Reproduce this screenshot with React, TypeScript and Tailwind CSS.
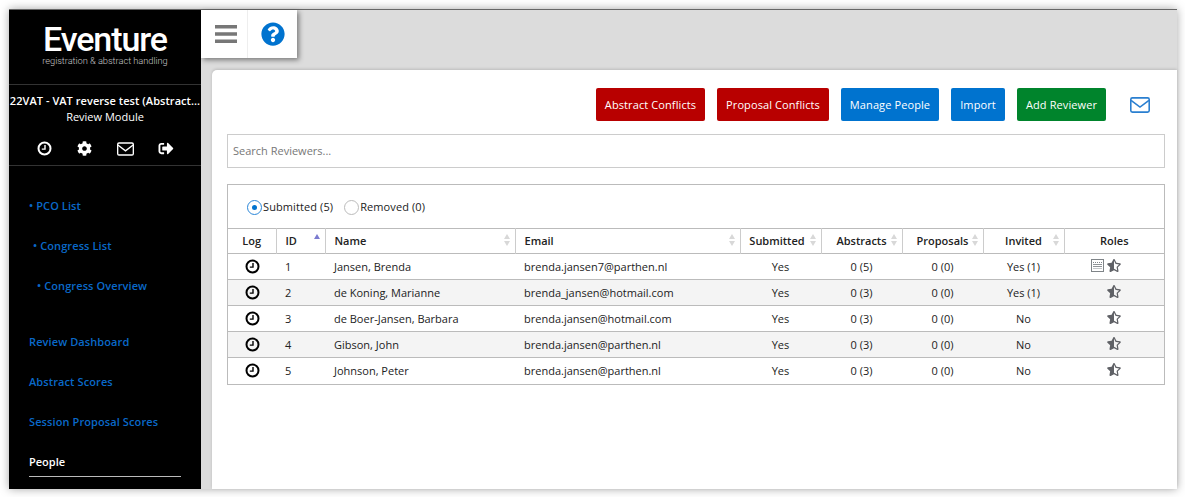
import React from "react";
import { FaCog, FaQuestionCircle, FaStarHalfAlt, FaSignOutAlt } from "react-icons/fa";

const Clock = ({ className = "" }: { className?: string }) => (
  <svg viewBox="0 0 15 15" className={className} width="15" height="15">
    <circle cx="7.5" cy="7.5" r="6" fill="none" stroke="currentColor" strokeWidth="2" />
    <path d="M8 4V8.1H4.8" fill="none" stroke="currentColor" strokeWidth="1.4" />
  </svg>
);

const Envelope = ({ w, h, className = "" }: { w: number; h: number; className?: string }) => (
  <svg viewBox="0 0 19 15" width={w} height={h} className={className}>
    <rect x="0.75" y="0.75" width="17.5" height="13.5" rx="1.5" fill="none" stroke="currentColor" strokeWidth="1.5" />
    <path d="M1 3L9.5 9.5L18 3" fill="none" stroke="currentColor" strokeWidth="1.5" />
  </svg>
);

const Sort = ({ up = false }: { up?: boolean }) => (
  <span className="absolute right-[5px] top-[5px] flex flex-col gap-[2px]">
    <svg width="6" height="5" viewBox="0 0 6 5"><path d="M3 0L6 5H0Z" fill={up ? "#7b7bd0" : "#d8d8d8"} /></svg>
    <svg width="6" height="5" viewBox="0 0 6 5"><path d="M0 0H6L3 5Z" fill={up ? "#ffffff" : "#d8d8d8"} /></svg>
  </span>
);

const Star = () => <FaStarHalfAlt className="text-[#5f6166] w-[14px] h-[13px]" />;

const Sheet = () => (
  <svg width="13" height="13" viewBox="0 0 13 13">
    <rect x="0.5" y="0.5" width="12" height="12" fill="#fff" stroke="#7f8488" />
    <path d="M2 3.5H11" stroke="#7f8488" strokeDasharray="1 1" />
    <path d="M2 5.5H11M2 7.5H11" stroke="#8f9498" />
    <path d="M2 9.5H11" stroke="#c4c7ca" />
  </svg>
);

const rows = [
  ["1", "Jansen, Brenda", "brenda.jansen7@parthen.nl", "Yes", "0 (5)", "0 (0)", "Yes (1)", true],
  ["2", "de Koning, Marianne", "brenda_jansen@hotmail.com", "Yes", "0 (3)", "0 (0)", "Yes (1)", false],
  ["3", "de Boer-Jansen, Barbara", "brenda.jansen@hotmail.com", "Yes", "0 (3)", "0 (0)", "No", false],
  ["4", "Gibson, John", "brenda.jansen@parthen.nl", "Yes", "0 (3)", "0 (0)", "No", false],
  ["5", "Johnson, Peter", "brenda.jansen@parthen.nl", "Yes", "0 (3)", "0 (0)", "No", false],
] as const;

const NavLink = ({ children, className = "" }: { children: React.ReactNode; className?: string }) => (
  <div className={`h-[40px] flex items-center font-semibold tracking-[0.1px] text-[#0a69c9] ${className}`}>{children}</div>
);

const Btn = ({ children, color, width }: { children: React.ReactNode; color: string; width: string }) => (
  <button className={`h-[33px] pt-[1px] rounded-[2px] text-white text-[11px] tracking-[0.1px] flex items-center justify-center ${color} ${width}`}>{children}</button>
);

export default function App() {
  return (
    <div className="w-[1185px] h-[497px] bg-white overflow-hidden pt-[9px] pl-[9px] font-['Open_Sans',sans-serif] text-[11px] text-[#222]">
      <div className="w-[1168px] h-[480px] flex border-t border-[#666] shadow-[0_0_9px_rgba(0,0,0,0.35)] bg-white">
        <aside className="w-[192px] shrink-0 bg-black text-white flex flex-col">
          <div className="h-[75px] border-b border-[#333] flex flex-col items-center pt-[13px]">
            <div className="font-['Roboto',sans-serif] font-medium text-[34px] leading-[33px] tracking-[-1.1px] text-white">Eventure</div>
            <div className="font-['Roboto',sans-serif] font-light text-[9.3px] leading-[9px] tracking-[-0.05px] text-[#c4c4c4]">registration &amp; abstract handling</div>
          </div>
          <div className="h-[81px] border-b border-[#333] flex flex-col">
            <div className="mt-[8px] font-semibold text-center whitespace-nowrap leading-[16px] tracking-[0.05px]">22VAT - VAT reverse test (Abstract...</div>
            <div className="text-center leading-[16px]">Review Module</div>
            <div className="mt-[16px] grid grid-cols-4 items-center justify-items-center w-[162px] ml-[15px] text-white">
              <Clock className="text-white" />
              <FaCog className="w-[15px] h-[15px]" />
              <Envelope w={17} h={14} />
              <FaSignOutAlt className="w-[16px] h-[15px]" />
            </div>
          </div>
          <div className="pl-[20px] pt-[20px] flex-1">
            <NavLink>• PCO List</NavLink>
            <NavLink className="pl-[4px]">• Congress List</NavLink>
            <NavLink className="pl-[8px]">• Congress Overview</NavLink>
            <div className="h-[16px]" />
            <NavLink>Review Dashboard</NavLink>
            <NavLink>Abstract Scores</NavLink>
            <NavLink>Session Proposal Scores</NavLink>
            <div className="w-[152px] h-[31px] pt-[3px] mt-[4px] flex items-center font-semibold text-white border-b border-[#bbb]">People</div>
          </div>
        </aside>
        <main className="flex-1 relative bg-[#dcdcdc] flex flex-col">
          <div className="absolute left-0 top-0 w-[96px] h-[48px] bg-white flex shadow-[2px_2px_5px_rgba(0,0,0,0.45)]">
            <div className="w-[47px] border-r border-[#eee] flex items-center justify-center pl-[3px]">
              <svg width="22" height="18" viewBox="0 0 22 18">
                <path d="M0 0H22V3.4H0ZM0 7.3H22V10.7H0ZM0 14.6H22V18H0Z" fill="#777" />
              </svg>
            </div>
            <div className="flex-1 flex items-center justify-center">
              <FaQuestionCircle className="w-[24px] h-[24px] text-[#0073cf]" />
            </div>
          </div>
          <div className="h-[60px] shrink-0" />
          <div className="flex-1 ml-[11px] bg-white rounded-tl-[5px] shadow-[0_-1px_3px_rgba(0,0,0,0.15)] pl-[15px] pr-[12px] pt-[18px]">
            <div className="flex items-center justify-end h-[33px] pr-[15px]">
              <Btn color="bg-[#b80000]" width="w-[109px]">Abstract Conflicts</Btn>
              <Btn color="bg-[#b80000] ml-[12px]" width="w-[112px]">Proposal Conflicts</Btn>
              <Btn color="bg-[#0073cf] ml-[12px]" width="w-[98px]">Manage People</Btn>
              <Btn color="bg-[#0073cf] ml-[12px]" width="w-[54px]">Import</Btn>
              <Btn color="bg-[#00842c] ml-[12px]" width="w-[89px]">Add Reviewer</Btn>
              <Envelope w={20} h={16} className="ml-[24px] text-[#2a7fd0]" />
            </div>
            <div className="mt-[13px] h-[34px] border border-[#ccc] flex items-center pl-[5px] text-[#777]">Search Reviewers...</div>
            <div className="mt-[16px] border border-[#bbb]">
              <div className="h-[43px] flex items-center pl-[19px] pt-[1px]">
                <span className="w-[15px] h-[15px] rounded-full border border-[#2a86d8] flex items-center justify-center">
                  <span className="w-[5px] h-[5px] rounded-full bg-[#0073cf]" />
                </span>
                <span className="ml-[1px] tracking-[0.1px]">Submitted (5)</span>
                <span className="ml-[11px] w-[15px] h-[15px] rounded-full border border-[#bbb]" />
                <span className="ml-[1px] tracking-[0.1px]">Removed (0)</span>
              </div>
              <table className="w-full table-fixed border-collapse">
                <colgroup>
                  <col className="w-[48px]" /><col className="w-[49px]" /><col className="w-[190px]" /><col className="w-[225px]" />
                  <col className="w-[81px]" /><col className="w-[81px]" /><col className="w-[81px]" /><col className="w-[81px]" /><col />
                </colgroup>
                <thead>
                  <tr className="h-[25px] border-y border-[#bbb] font-semibold">
                    <th className="font-semibold border-r border-[#ccc]">Log</th>
                    <th className="relative font-semibold border-r border-[#ccc] text-left pl-[9px]">ID<Sort up /></th>
                    <th className="relative font-semibold border-r border-[#ccc] text-left pl-[9px]">Name<Sort /></th>
                    <th className="relative font-semibold border-r border-[#ccc] text-left pl-[9px]">Email<Sort /></th>
                    <th className="relative font-semibold border-r border-[#ccc] pr-[7px]">Submitted<Sort /></th>
                    <th className="relative font-semibold border-r border-[#ccc]">Abstracts<Sort /></th>
                    <th className="relative font-semibold border-r border-[#ccc]">Proposals<Sort /></th>
                    <th className="relative font-semibold border-r border-[#ccc]">Invited<Sort /></th>
                    <th className="font-semibold">Roles</th>
                  </tr>
                </thead>
                <tbody>
                  {rows.map((r, i) => (
                    <tr key={r[0]} className={`h-[26px] border-b border-[#bbb] last:border-b-0 ${i % 2 ? "bg-[#f4f4f4]" : "bg-white"} ${i < 4 ? "[&>td]:pt-[1px]" : ""}`}>
                      <td className="text-center"><Clock className="inline-block text-black mb-[2px]" /></td>
                      <td className="pl-[9px]">{r[0]}</td>
                      <td className="pl-[9px]">{r[1]}</td>
                      <td className="pl-[9px]">{r[2]}</td>
                      <td className="text-center">{r[3]}</td>
                      <td className="text-center">{r[4]}</td>
                      <td className="text-center">{r[5]}</td>
                      <td className="text-center">{r[6]}</td>
                      <td>
                        <div className="flex items-center justify-end gap-[3px] mb-[3px] pr-[43px]">
                          {r[7] ? <Sheet /> : null}
                          <Star />
                        </div>
                      </td>
                    </tr>
                  ))}
                </tbody>
              </table>
            </div>
          </div>
        </main>
      </div>
    </div>
  );
}
